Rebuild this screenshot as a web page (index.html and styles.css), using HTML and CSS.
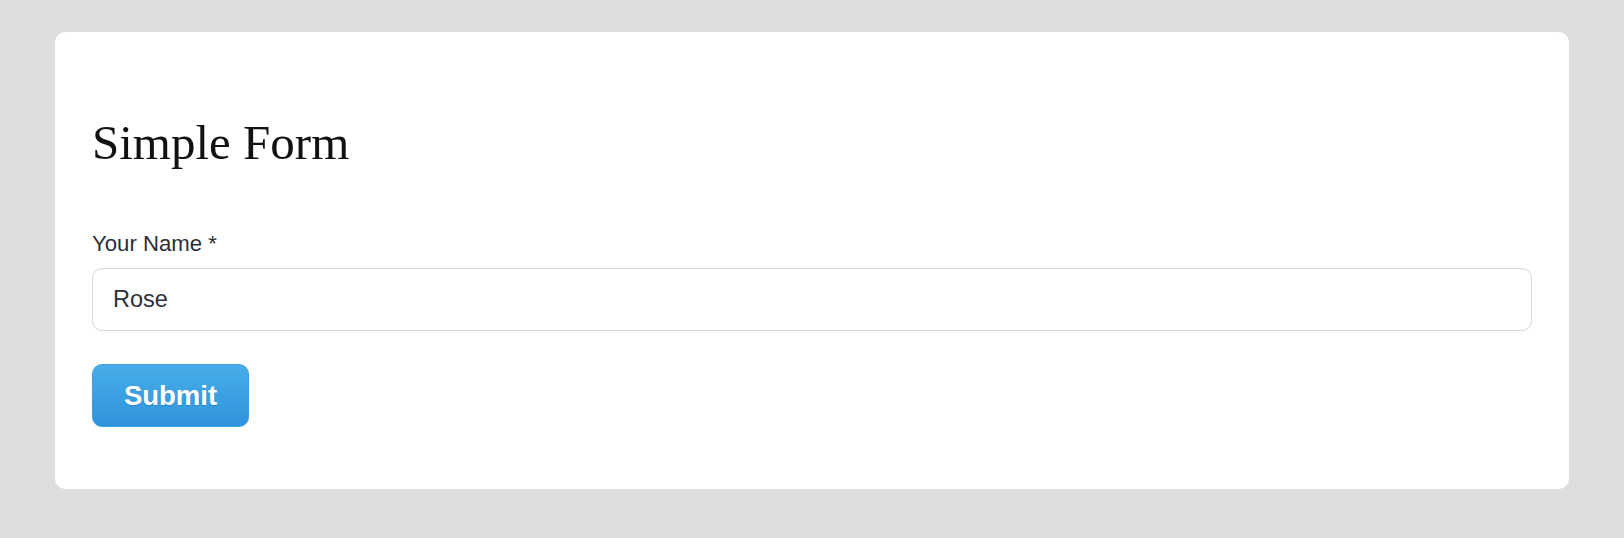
FILE: index.html
```html
<!DOCTYPE html>
<html lang="en">
<head>
    <meta charset="UTF-8">
    <meta name="viewport" content="width=device-width, initial-scale=1.0">
    <title>Simple Form</title>
    <link rel="stylesheet" href="styles.css">
</head>
<body>
    <div class="card">
        <h1>Simple Form</h1>
        <form class="form" onsubmit="return false;">
            <label for="name">Your Name *</label>
            <input type="text" id="name" value="Rose">
            <div>
                <button type="submit">Submit</button>
            </div>
        </form>
    </div>
</body>
</html>
```

FILE: styles.css
```css
:root {
    --bg: #dedede;
    --text: #2d2f3a;
    --border: #d6d6d9;
    --blue-top: #47aee9;
    --blue-bottom: #2f93dc;
}

* {
    box-sizing: border-box;
}

body {
    margin: 0;
    padding: 32px 55px 49px;
    background-color: var(--bg);
    font-family: 'Liberation Sans', Arial, Helvetica, sans-serif;
    color: var(--text);
}

.card {
    background: white;
    border-radius: 10px;
    padding: 83px 37px 62px;
}

h1 {
    margin: 0 0 60px;
    font-family: 'Liberation Serif', 'Times New Roman', serif;
    font-weight: normal;
    font-size: 49px;
    line-height: 56px;
    color: #111;
}

.form {
    display: flex;
    flex-direction: column;
}

label {
    font-size: 22.2px;
    line-height: 26px;
    margin-bottom: 11px;
}

input {
    height: 63px;
    padding: 0 20px;
    border: 1px solid var(--border);
    border-radius: 10px;
    font-family: inherit;
    font-size: 23.5px;
    color: var(--text);
    outline: none;
    margin-bottom: 33px;
}

button {
    height: 63px;
    width: 157px;
    padding: 0;
    border: 1px solid #3a9ee0;
    border-radius: 10px;
    background: linear-gradient(to bottom, var(--blue-top), var(--blue-bottom));
    color: white;
    font-family: inherit;
    font-weight: bold;
    font-size: 27.5px;
    text-shadow: 0 1px 1px rgba(0,0,0,0.15);
    cursor: pointer;
}
```
